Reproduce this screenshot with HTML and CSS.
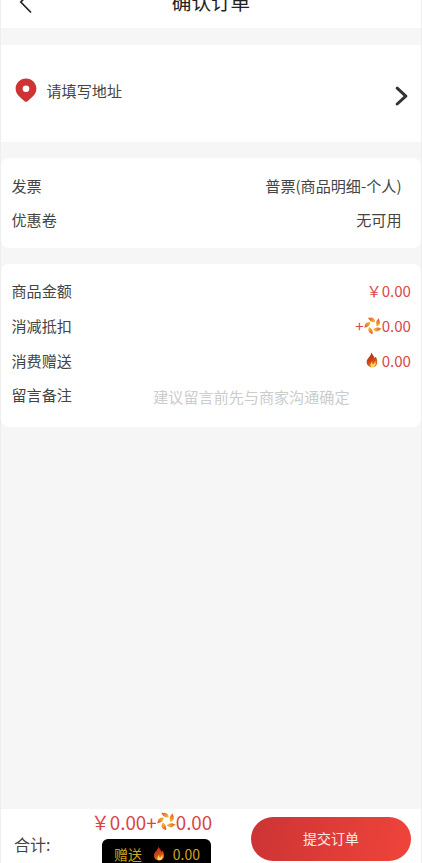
FILE: index.html
```html
<!DOCTYPE html>
<html lang="zh-CN">
<head>
<meta charset="utf-8">
<title>确认订单</title>
<link rel="stylesheet" href="styles.css">
</head>
<body>
<svg class="defs" aria-hidden="true">
  <defs>
    <linearGradient id="gold" x1="0" y1="0" x2="1" y2="0.4">
      <stop offset="0" stop-color="#e2482a"/><stop offset="0.5" stop-color="#ee7f2e"/><stop offset="1" stop-color="#efb53a"/>
    </linearGradient>
    <linearGradient id="fire" x1="0.2" y1="0" x2="0.6" y2="1">
      <stop offset="0" stop-color="#a82a18"/><stop offset="0.55" stop-color="#cf4418"/><stop offset="1" stop-color="#e58a1c"/>
    </linearGradient>
    <symbol id="flower" viewBox="0 0 20 20">
      <path id="petal" fill="url(#gold)" d="M12.300 6.800C8.700 7.300 5.600 5.500 4.600 1.600C6 2.200 7 2.200 8.200 1.800C11 2.200 12.500 4.200 12.300 6.800Z"/>
      <use href="#petal" transform="rotate(72 10 10.500)"/>
      <use href="#petal" transform="rotate(144 10 10.500)"/>
      <use href="#petal" transform="rotate(216 10 10.500)"/>
      <use href="#petal" transform="rotate(288 10 10.500)"/>
    </symbol>
    <symbol id="flame" viewBox="0 0 12 16">
      <path fill="url(#fire)" d="M5.300 0.500C6.400 2.800 8.200 4 8.700 6.300C9.300 5.700 9.500 5.200 9.600 4.600C11 7 11.700 9.400 11.100 11.700C10.600 13.700 9.200 15 7.200 15.300H4.600C1.800 14.400 0.300 12.200 0.700 9.300C1.100 6.200 4.900 4.500 5.300 0.500Z"/>
      <path class="glow" d="M5.200 15.200C3.700 13.600 4.400 11.500 6.200 9.300C6.100 11.300 6.400 12.100 7 12.600C8.200 11.600 9 10.500 9.300 9C10.300 11.500 9.500 14.500 7.100 15.300Z"/>
    </symbol>
  </defs>
</svg>
<div class="page">
  <header class="nav">
    <svg class="back" viewBox="0 0 14 24"><path d="M12 1.500L1.800 12L12 22.500"/></svg>
    <h1>确认订单</h1>
  </header>
  <section class="address">
    <svg class="pin" viewBox="0 0 22 24"><path fill-rule="evenodd" d="M11 0.500C5.200 0.500 0.600 5 0.600 10.700C0.600 14.300 2.600 17.200 5.600 19.800L9.800 23.400Q11 24.200 12.200 23.400L16.400 19.800C19.400 17.200 21.400 14.300 21.400 10.700C21.400 5 16.800 0.500 11 0.500ZM11 7.500A3.300 3.300 0 1 1 11 14.100A3.300 3.300 0 1 1 11 7.500Z"/></svg>
    <span>请填写地址</span>
    <svg class="arrow" viewBox="0 0 14 20"><path d="M2.200 2.200L10.800 10.200L2.200 18"/></svg>
  </section>
  <section class="card invoice">
    <div class="row"><span>发票</span><span>普票(商品明细-个人)</span></div>
    <div class="row"><span>优惠卷</span><span>无可用</span></div>
  </section>
  <section class="card amounts">
    <div class="row"><span>商品金额</span><span class="price">&#xFFE5;0.00</span></div>
    <div class="row"><span>消减抵扣</span><span class="price">+<svg class="flower"><use href="#flower"/></svg>0.00</span></div>
    <div class="row"><span>消费赠送</span><span class="price"><svg class="flame"><use href="#flame"/></svg>0.00</span></div>
    <div class="row"><span>留言备注</span><span class="hint">建议留言前先与商家沟通确定</span></div>
  </section>
  <footer class="bar">
    <span class="label">合计:</span>
    <div class="sum">
      <div class="total">&#xFFE5;0.00+<svg class="flower"><use href="#flower"/></svg>0.00</div>
      <div class="gift"><span>赠送</span><svg class="flame"><use href="#flame"/></svg><span>0.00</span></div>
    </div>
    <button class="submit">提交订单</button>
  </footer>
</div>
</body>
</html>
```
FILE: styles.css
```css
* { box-sizing: border-box; }
body {
  margin: 0;
  height: 863px;
  overflow: hidden;
  background: #f6f6f6;
  color: #444;
  font: 15.1px/20px "Noto Sans CJK SC", sans-serif;
}
svg { display: block; flex: none; }
.defs { width: 0; height: 0; float: left; }
.page {
  height: 863px;
  display: flex;
  flex-direction: column;
  border: solid #eee;
  border-width: 0 1px;
  overflow: hidden;
}
.nav {
  flex: none;
  height: 28px;
  display: grid;
  grid-template-columns: 60px 1fr 60px;
  background: #fff;
}
.back {
  width: 14px;
  height: 24px;
  margin: -10px 0 0 18px;
  fill: none;
  stroke: #222;
  stroke-width: 1.7;
}
h1 {
  margin: -12px 0 0;
  color: #222;
  font-size: 19.6px;
  font-weight: 400;
  line-height: 28px;
  text-align: center;
}
.address {
  flex: none;
  height: 97px;
  margin-top: 17px;
  padding: 0 12px 7px 13.5px;
  display: flex;
  align-items: center;
  background: #fff;
}
.pin { width: 22px; height: 24px; margin-right: 10px; fill: #cf3434; }
.arrow {
  width: 14px;
  height: 20px;
  margin: 11px 0 0 auto;
  fill: none;
  stroke: #333;
  stroke-width: 3;
  stroke-linecap: round;
  stroke-linejoin: round;
}
.card {
  flex: none;
  margin-top: 16px;
  padding: 9.4px 10px 0 10.5px;
  border-radius: 8px;
  background: #fff;
}
.invoice { height: 90px; padding-right: 19.5px; }
.amounts { height: 163px; padding-top: 9px; }
.row {
  height: 34.7px;
  display: flex;
  align-items: center;
  justify-content: space-between;
}
.price { display: flex; align-items: center; color: #d94a4a; }
.price .flower { width: 18px; height: 18px; }
.price .flame { width: 12px; height: 16px; margin-right: 3.5px; }
.glow { fill: #f8dc68; }
.hint { margin: 4px 61.5px 0 0; color: #ccc; }
.bar {
  flex: none;
  height: 54px;
  margin-top: auto;
  display: flex;
  background: #fff;
}
.label { width: 80px; padding: 23px 0 0 13px; font-size: 16px; line-height: 24px; }
.sum { width: 170px; }
.total {
  height: 30px;
  display: flex;
  align-items: center;
  padding: 0 0 4px 10px;
  color: #d94545;
  font-size: 18.8px;
}
.total .flower { width: 19px; height: 19px; margin-top: -3px; }
.gift {
  width: 109px;
  height: 32px;
  margin-left: 21px;
  padding: 0 11px 3px 12px;
  display: flex;
  align-items: center;
  justify-content: space-between;
  border-radius: 6px;
  background: #000;
  color: #d0a51c;
  font-size: 14px;
}
.gift .flame { width: 12px; height: 15px; margin-left: 3px; }
.gift .glow { fill: #e89a20; }
.submit {
  width: 160px;
  height: 44px;
  margin-top: 8px;
  padding: 0 0 2px;
  border: 0;
  border-radius: 22px;
  background: linear-gradient(100deg, #cc3434, #ef443b);
  color: #ffe9e5;
  font: inherit;
  font-size: 14px;
}
```
